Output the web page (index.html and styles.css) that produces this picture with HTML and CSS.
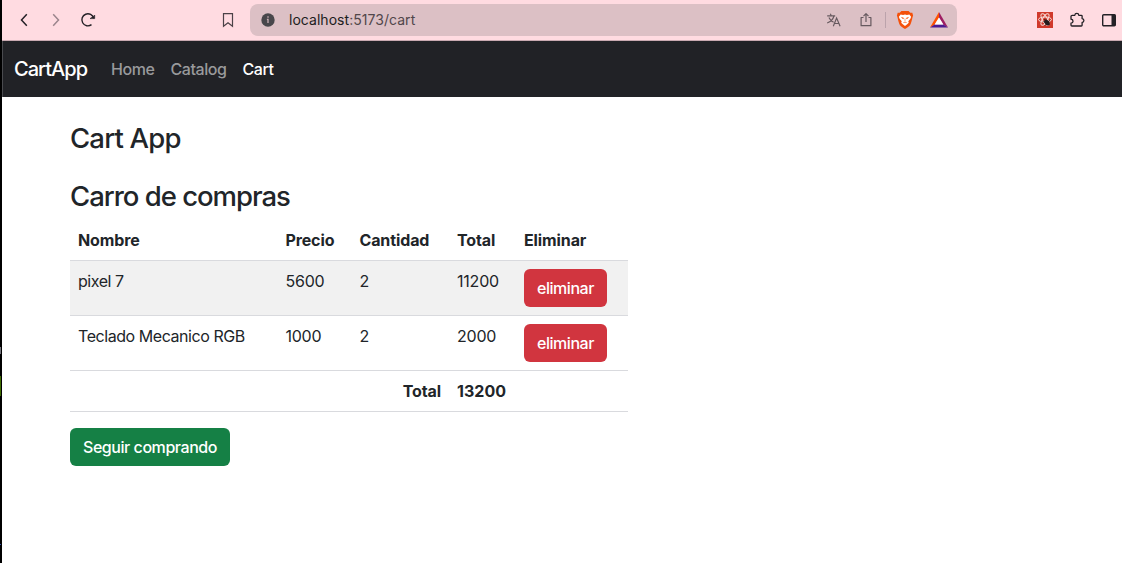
FILE: index.html
```html
<!DOCTYPE html>
<html lang="es">
<head>
<meta charset="utf-8">
<title>CartApp</title>
<link rel="stylesheet" href="styles.css">
</head>
<body>
<div class="screen">
  <div class="edge"></div>
  <div class="window">
    <header class="toolbar">
      <div class="nav-buttons">
        <svg class="icon" width="20" height="20" viewBox="0 0 20 20"><path d="M12.800 4.200 7.500 10l5.300 5.800" fill="none" stroke="#242126" stroke-width="1.500"/></svg>
        <svg class="icon" width="20" height="20" viewBox="0 0 20 20"><path d="M7.200 4.200 12.500 10l-5.300 5.800" fill="none" stroke="#9b858c" stroke-width="1.500"/></svg>
        <svg class="icon" width="20" height="20" viewBox="0 0 20 20"><path d="M13.500 14.600a6 6 0 1 1 2.200-6.200" fill="none" stroke="#242126" stroke-width="1.400"/><path d="M12 8.600h4.700V5.100l-1.100 1.200z" fill="#242126" stroke="#242126" stroke-width=".6"/></svg>
      </div>
      <svg class="icon bookmark" width="20" height="20" viewBox="0 0 20 20"><path d="M5.500 3.700h9v12.600L10 12.700l-4.500 3.600z" fill="none" stroke="#4b4247" stroke-width="1.200"/></svg>
      <div class="address">
        <svg class="icon" width="14" height="14" viewBox="0 0 14 14"><circle cx="7" cy="7" r="6.700" fill="#48474b"/><path d="M7 3.200v1.500M5.900 6.300H7v3.600" fill="none" stroke="#c9b0b6" stroke-width="1.300"/></svg>
        <div class="url"><span class="host">localhost</span>:5173/cart</div>
        <div class="address-actions">
          <svg class="icon" width="16" height="16" viewBox="0 0 16 16"><path d="M1.200 3.800h8M4.300 1.800l1 2M8 4C7 7.500 4.500 9.700 1.200 11M2.900 5.500c1 2.200 2.600 3.800 4.700 4.800M7.300 14.200l3.300-8.200 3.500 8.200M8.500 11.500H13" fill="none" stroke="#66595f" stroke-width="1.150"/></svg>
          <svg class="icon" width="16" height="16" viewBox="0 0 16 16"><path d="M5.500 5.500H3.100v8.200h9.800V5.500h-2.400M8 10V1.700M5.500 4.200 8 1.700l2.500 2.500" fill="none" stroke="#66595f" stroke-width="1.200" stroke-linejoin="round"/></svg>
          <span class="divider"></span>
          <svg class="icon" width="18" height="20" viewBox="0 0 18 20"><path d="M5.400 1h7.200l1.700 1.800 2-.1.800 2.900-.5 1.500c-.8 3.500-1.500 6.500-2.600 8.200C13.100 16.700 10.500 18.200 9 19c-1.500-.8-4.100-2.300-5-3.700-1.100-1.700-1.800-4.700-2.600-8.200L.9 5.600l.8-2.900 2 .1z" fill="#f4510b"/><path d="m4.600 4.500 2.500.4L9 4.400l1.900.5 2.500-.4 1.700 2.300-.7 1.900-2.100 2.500.5 1.600-1.600 1.400L9 16l-2.200-1.800-1.600-1.400.5-1.600-2.100-2.500-.7-1.900z" fill="#fff"/><path d="m5.500 7.500 2.200.6-.5.700zM12.500 7.500l-2.200.6.500.7zM9 8.500v2.500M7.300 12.600 9 11.900l1.700.7" fill="#f4510b" stroke="#f4510b" stroke-width=".5"/></svg>
          <svg class="icon" width="18" height="16" viewBox="0 0 18 16"><path d="M9 0 0 15.600 4.600 12.700 9 5.400z" fill="#ff5000"/><path d="m9 0 9 15.600-4.600-2.900L9 5.400z" fill="#9e1f63"/><path d="M0 15.600h18l-4.600-3.100H4.600z" fill="#4c1b91"/><path d="m9 5.400 4.400 7.200H4.600z" fill="#fff"/></svg>
        </div>
      </div>
      <div class="extensions">
        <svg class="icon" width="16" height="16" viewBox="0 0 16 16"><path d="M0 0h16v16H0z" fill="#d0392b"/><g fill="none" stroke="#f6dcd8" stroke-width="1"><ellipse cx="8" cy="7.500" rx="6.500" ry="2.500"/><ellipse cx="8" cy="7.500" rx="6.500" ry="2.500" transform="rotate(60 8 7.500)"/><ellipse cx="8" cy="7.500" rx="6.500" ry="2.500" transform="rotate(120 8 7.500)"/></g><ellipse cx="10" cy="10.500" rx="2.200" ry="3.400" fill="#231b1c" transform="rotate(-40 10 10.500)"/><path d="m6.500 9.500 6 3M12.500 8.500l-4.500 5M7.500 7l2 3" stroke="#231b1c"/></svg>
        <svg class="icon" width="16" height="16" viewBox="0 0 16 16"><path d="M3.300 3.300h2.500c.2-2.500 3.800-2.500 4 0h2.500q.8 0 .8.800v2.500c2.400.2 2.400 3.700 0 3.900v2.700q0 .8-.8.800H3q-1 0-1-.8v-2c2.700-.4 2.700-3.600 0-4V4.300q0-1 1.300-1z" fill="none" stroke="#242126" stroke-width="1.300" stroke-linejoin="round"/></svg>
        <svg class="icon" width="16" height="16" viewBox="0 0 16 16"><rect x="1.700" y="2.700" width="12.600" height="11" rx="1" fill="none" stroke="#242126" stroke-width="1.400"/><path d="M10.500 2.500h3.800v11.300h-3.800z" fill="#242126"/></svg>
      </div>
    </header>
    <nav class="navbar">
      <span class="brand">CartApp</span>
      <span class="link link-home">Home</span>
      <span class="link link-catalog">Catalog</span>
      <span class="link link-active">Cart</span>
    </nav>
    <main class="content">
      <h1 class="title">Cart App</h1>
      <h2 class="title title-cart">Carro de compras</h2>
      <table class="cart">
        <colgroup><col class="c-name"><col class="c-price"><col class="c-qty"><col class="c-total"><col class="c-remove"></colgroup>
        <thead>
          <tr><th>Nombre</th><th>Precio</th><th>Cantidad</th><th>Total</th><th>Eliminar</th></tr>
        </thead>
        <tbody>
          <tr class="striped"><td class="name">pixel 7</td><td>5600</td><td>2</td><td>11200</td><td><button class="btn btn-danger">eliminar</button></td></tr>
          <tr><td class="name">Teclado Mecanico RGB</td><td>1000</td><td>2</td><td>2000</td><td><button class="btn btn-danger">eliminar</button></td></tr>
        </tbody>
        <tfoot>
          <tr><td class="sum-label" colspan="3">Total</td><td class="sum" colspan="2">13200</td></tr>
        </tfoot>
      </table>
      <button class="btn btn-success">Seguir comprando</button>
    </main>
  </div>
</div>
</body>
</html>
```
FILE: styles.css
```css
* { box-sizing: border-box; }
body {
  margin: 0;
  overflow: hidden;
  font: 16px/24px Inter, "Liberation Sans", sans-serif;
  letter-spacing: -0.2px;
  color: #212529;
  background: #fff;
}
.screen { display: flex; height: 563px; }
.edge {
  width: 2px;
  background:
    linear-gradient(#3d6b00, #3d6b00) 0 376px / 1px 20px no-repeat,
    linear-gradient(#74747c, #74747c) 0 347px / 1px 7px no-repeat,
    linear-gradient(#3450b0, #3450b0) 0 544px / 1px 1px no-repeat,
    #000;
}
.window { flex: 1; min-width: 0; }
.icon { display: block; flex: none; }

.toolbar {
  display: flex;
  align-items: center;
  height: 41px;
  padding: 0 5px 1px 12px;
  background: #ffdbe1;
  border-bottom: 1px solid #c9aab1;
}
.nav-buttons { display: flex; gap: 12px; }
.bookmark { margin-left: 120px; }
.address {
  display: flex;
  align-items: center;
  width: 707px;
  height: 32px;
  margin-left: 12px;
  padding: 0 9px 0 11px;
  border-radius: 8px;
  background: #dcc0c5;
}
.url {
  margin-left: 14px;
  font-size: 14px;
  letter-spacing: 0.04px;
  color: #51474b;
}
.host { color: #211d20; }
.address-actions {
  display: flex;
  align-items: center;
  gap: 11px;
  margin-left: auto;
}
.address-actions .icon:nth-child(1) { margin-right: 5px; }
.address-actions .icon:last-child { margin-left: 5px; }
.divider { width: 1px; height: 16px; margin-right: -1px; background: #bba3ab; }
.extensions { display: flex; gap: 16px; margin-left: auto; }

.navbar {
  display: flex;
  align-items: center;
  height: 56px;
  padding: 0 12px 0 11px;
  border-left: 1px solid #4a4b4f;
  background: #212226;
  color: #999a9c;
  font-weight: 450;
}
.brand { width: 97px; font-size: 20px; letter-spacing: -0.97px; color: #fff; }
.link { letter-spacing: -0.42px; }
.link-home { width: 59.5px; }
.link-catalog { width: 72px; }
.link-active { color: #fff; font-weight: 500; }

.content { padding: 24px 68px 0; }
.title {
  margin: 0;
  font-size: 27.5px;
  font-weight: 500;
  line-height: 34px;
  letter-spacing: -1.02px;
}
.title:first-child { letter-spacing: -0.8px; }
.title-cart { margin: 24px 0 7px; }

.cart {
  table-layout: fixed;
  width: 558px;
  margin-bottom: 16px;
  border-collapse: separate;
  border-spacing: 0;
}
.c-name { width: 207.4px; }
.c-price { width: 74px; }
.c-qty { width: 97.6px; }
.c-total { width: 67px; }
.cart th, .cart td {
  padding: 8px;
  border-bottom: 1px solid #d9dade;
  text-align: left;
  vertical-align: top;
}
.cart .name { letter-spacing: -0.44px; }
.cart th, .cart .sum, .cart .sum-label { font-weight: 700; letter-spacing: -0.1px; }
.cart .sum { letter-spacing: 0.05px; }
.cart .sum-label { text-align: right; }
.striped { background: #f1f1f1; }

.btn {
  display: block;
  height: 38px;
  padding: 0;
  border: 0;
  border-radius: 6px;
  font: inherit;
  font-weight: 450;
  letter-spacing: -0.45px;
  color: #fff;
}
.btn-danger { width: 83px; background: #d1353f; }
.btn-success { width: 160px; background: #158045; }
```
